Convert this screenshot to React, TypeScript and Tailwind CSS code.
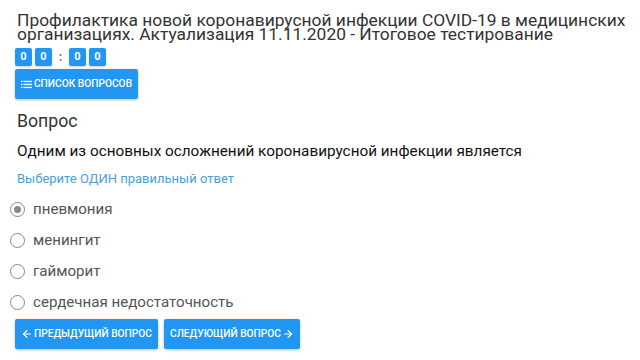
import { ArrowLeft, ArrowRight } from 'lucide-react'

const options = ['пневмония', 'менингит', 'гайморит', 'сердечная недостаточность']

function Digit({ value }: { value: string }) {
  return (
    <span className="w-[17px] h-[18px] flex items-center justify-center rounded-[2px] bg-[#2196f3] text-white text-[11px] font-bold shadow-[0_1px_2px_rgba(0,0,0,0.2)]">
      {value}
    </span>
  )
}

function ListIcon() {
  return (
    <svg width="11" height="9" viewBox="0 0 11 9">
      <rect x="0" y="0.8" width="1.5" height="1.3" fill="white" />
      <rect x="0" y="3.8" width="1.5" height="1.3" fill="white" />
      <rect x="0" y="6.8" width="1.5" height="1.3" fill="white" />
      <rect x="2.4" y="0.8" width="8.6" height="1.3" fill="white" />
      <rect x="2.4" y="3.8" width="8.6" height="1.3" fill="white" />
      <rect x="2.4" y="6.8" width="8.6" height="1.3" fill="white" />
    </svg>
  )
}

const btn =
  'h-[30px] flex items-center justify-center rounded-[2px] bg-[#2196f3] text-white text-[10.2px] font-medium uppercase shadow-[0_1px_3px_rgba(0,0,0,0.25)]'

export default function App() {
  return (
    <div className="w-[640px] h-[360px] bg-white overflow-hidden font-['Roboto',sans-serif]">
      <h1 className="pl-[17px] pt-[14px] text-[17.4px] leading-[13.5px] text-[#333] whitespace-nowrap">
        Профилактика новой коронавирусной инфекции COVID-19 в медицинских
        <br />
        организациях. Актуализация 11.11.2020 - Итоговое тестирование
      </h1>

      <div className="pl-[15px] mt-[7px] flex items-center gap-[3px]">
        <Digit value="0" />
        <Digit value="0" />
        <span className="w-[11px] text-center text-[12px] leading-[18px] text-[#777] font-bold">:</span>
        <Digit value="0" />
        <Digit value="0" />
      </div>

      <div className="pl-[15px] mt-[3px]">
        <button className={`${btn} w-[123px] gap-[2px]`}>
          <ListIcon />
          Список вопросов
        </button>
      </div>

      <div className="pl-[17px] mt-[11px] text-[17.7px] leading-[22px] text-[#333]">Вопрос</div>

      <div className="pl-[17px] mt-[9px] text-[15.3px] leading-[20px] text-[#111]">
        Одним из основных осложнений коронавирусной инфекции является
      </div>

      <div className="pl-[17px] mt-[10px] text-[13px] leading-[16px] text-[#4a9fd8]">
        Выберите ОДИН правильный ответ
      </div>

      <div className="mt-[7px] flex flex-col">
        {options.map((o, i) => (
          <label key={o} className="h-[31px] pl-[10px] flex items-center gap-[8px] text-[15.1px] text-[#555]">
            <span className="w-[15px] h-[15px] rounded-full border-[1.5px] border-[#888] flex items-center justify-center">
              {i === 0 && <span className="w-[7px] h-[7px] rounded-full bg-[#888]" />}
            </span>
            {o}
          </label>
        ))}
      </div>

      <div className="pl-[15px] mt-[1px] flex gap-[6px]">
        <button className={`${btn} w-[143px] gap-[1px]`}>
          <ArrowLeft size={12} strokeWidth={2.2} />
          Предыдущий вопрос
        </button>
        <button className={`${btn} w-[136px] gap-[1px]`}>
          Следующий вопрос
          <ArrowRight size={12} strokeWidth={2.2} />
        </button>
      </div>
    </div>
  )
}
